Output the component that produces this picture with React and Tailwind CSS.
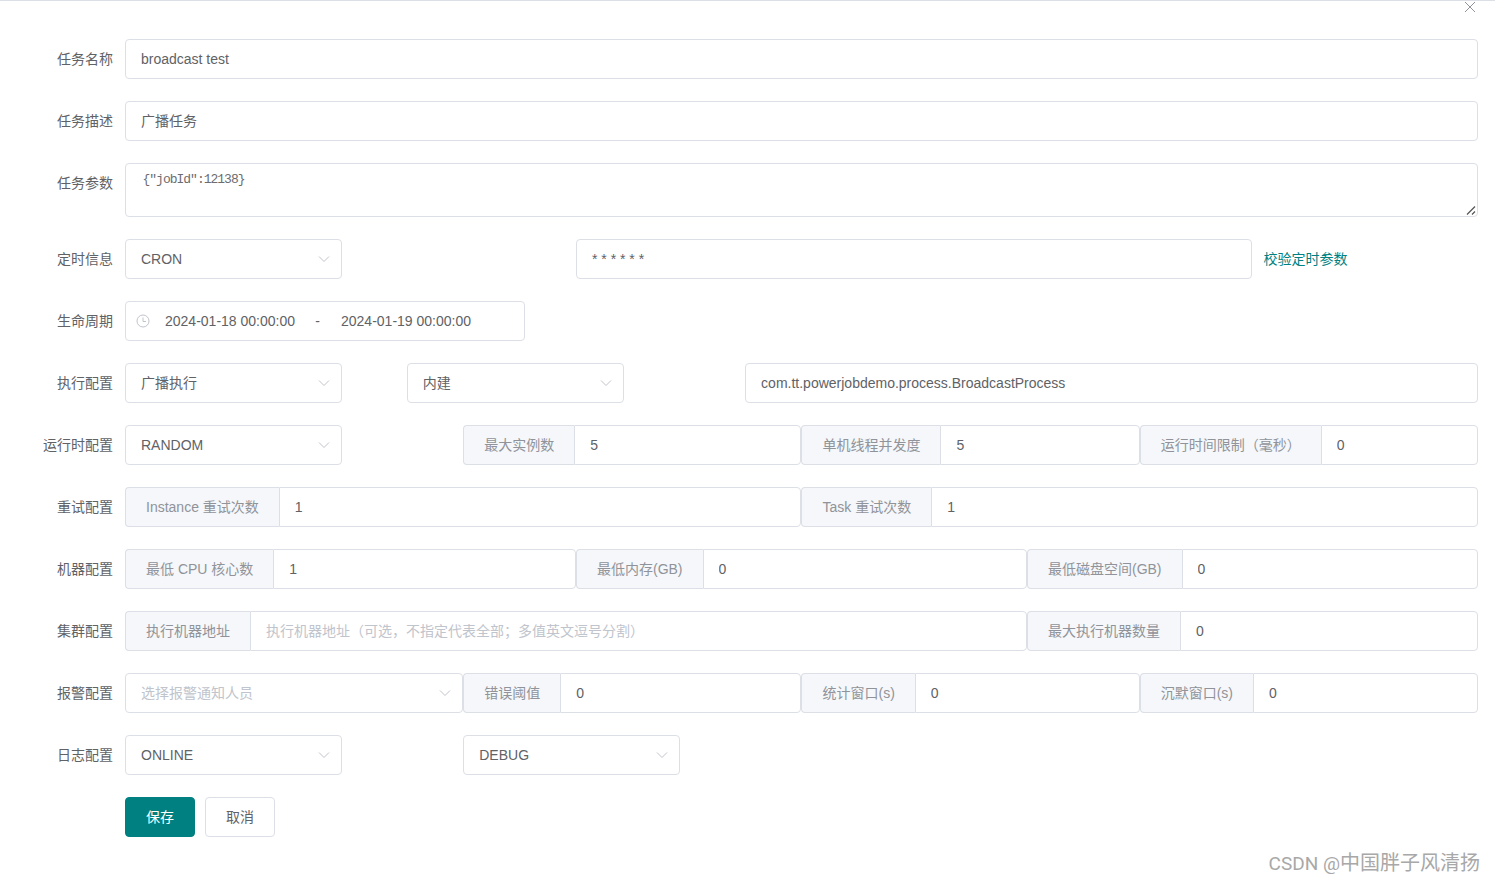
import React from "react";

const FONT = "font-['Liberation_Sans','Noto_Sans_CJK_SC',sans-serif]";

function Chevron() {
  return (
    <svg width="14" height="14" viewBox="0 0 14 14" fill="none" stroke="#c0c4cc" strokeWidth="1" className="shrink-0">
      <path d="M2 4.5 L7 9.5 L12 4.5" />
    </svg>
  );
}

function Select({ value, placeholder, className = "w-[217px]" }) {
  return (
    <div className={`flex h-10 items-center justify-between rounded-[4px] border border-[#dcdfe6] bg-white pl-[15px] pr-[10px] ${className}`}>
      <span className={value ? "text-[#606266]" : "text-[#c0c4cc]"}>{value || placeholder}</span>
      <Chevron />
    </div>
  );
}

function Input({ value = "", placeholder, className = "" }) {
  return (
    <input
      readOnly
      value={value}
      placeholder={placeholder}
      className={`block h-10 w-full rounded-[4px] border border-[#dcdfe6] bg-white px-[15px] leading-[19px] text-[#606266] outline-none placeholder:text-[#c0c4cc] ${className}`}
    />
  );
}

function Group({ addon, value, placeholder }) {
  return (
    <div className="flex h-10 w-full">
      <div className="flex shrink-0 items-center whitespace-nowrap rounded-l-[4px] border border-r-0 border-[#dcdfe6] bg-[#f5f7fa] px-5 text-[#909399]">
        {addon}
      </div>
      <Input value={value} placeholder={placeholder} className="min-w-0 flex-1 rounded-l-none" />
    </div>
  );
}

function Row({ label, children }) {
  return (
    <div className="mb-[22px] flex">
      <label className="w-[113px] shrink-0 text-right leading-10 text-[#606266]">{label}</label>
      <div className="ml-3 grid min-w-0 flex-1 grid-cols-[repeat(24,minmax(0,1fr))]">{children}</div>
    </div>
  );
}

export default function App() {
  return (
    <div className={`relative h-[882px] w-full overflow-hidden border-t border-[#dcdfe6] bg-white pr-[17.05px] pt-[38px] text-sm ${FONT}`}>
      <svg className="absolute right-[19px] top-0" width="12" height="12" viewBox="0 0 12 12" stroke="#909399" strokeWidth="1" fill="none">
        <path d="M1 1 L11 11 M11 1 L1 11" />
      </svg>

      <Row label="任务名称">
        <div className="col-span-24"><Input value="broadcast test" /></div>
      </Row>
      <Row label="任务描述">
        <div className="col-span-24"><Input value="广播任务" className="pb-[2px]" /></div>
      </Row>
      <Row label="任务参数">
        <div className="relative col-span-24">
          <textarea
            readOnly
            value={'{"jobId":12138}'}
            className="block h-[54px] w-full resize-none rounded-[4px] border border-[#dcdfe6] bg-white pb-[5px] pl-[16.5px] pr-[15px] pt-[6px] font-['Liberation_Mono',monospace] text-[13px] leading-[20px] tracking-[-1px] text-[#6b6d70] outline-none"
          />
          <svg className="pointer-events-none absolute bottom-[1px] right-[1px]" width="12" height="12" viewBox="0 0 12 12" fill="none" stroke="#555" strokeWidth="1.2">
            <path d="M2 10.5 L10 2.5 M7 10.5 L10 7.5" />
          </svg>
        </div>
      </Row>
      <Row label="定时信息">
        <div className="col-span-8"><Select value="CRON" /></div>
        <div className="col-span-12"><Input value="* * * * * *" /></div>
        <div className="col-span-4 pl-[11px] leading-10 text-[#008080]">校验定时参数</div>
      </Row>
      <Row label="生命周期">
        <div className="col-span-24">
          <div className="flex h-10 w-[400px] items-center rounded-[4px] border border-[#dcdfe6] bg-white pl-[10px] text-[#606266]">
            <svg width="14" height="14" viewBox="0 0 14 14" fill="none" stroke="#c0c4cc" strokeWidth="1" className="mr-[15px] shrink-0">
              <circle cx="7" cy="7" r="6" />
              <path d="M7 3.5 V7.5 H10" />
            </svg>
            <span className="w-[130px] whitespace-nowrap">2024-01-18 00:00:00</span>
            <span className="mr-px w-[45px] text-center">-</span>
            <span className="whitespace-nowrap">2024-01-19 00:00:00</span>
          </div>
        </div>
      </Row>
      <Row label="执行配置">
        <div className="col-span-5"><Select value="广播执行" /></div>
        <div className="col-span-6"><Select value="内建" /></div>
        <div className="col-span-13"><Input value="com.tt.powerjobdemo.process.BroadcastProcess" /></div>
      </Row>
      <Row label="运行时配置">
        <div className="col-span-6"><Select value="RANDOM" /></div>
        <div className="col-span-6"><Group addon="最大实例数" value="5" /></div>
        <div className="col-span-6"><Group addon="单机线程并发度" value="5" /></div>
        <div className="col-span-6"><Group addon="运行时间限制（毫秒）" value="0" /></div>
      </Row>
      <Row label="重试配置">
        <div className="col-span-12"><Group addon="Instance 重试次数" value="1" /></div>
        <div className="col-span-12"><Group addon="Task 重试次数" value="1" /></div>
      </Row>
      <Row label="机器配置">
        <div className="col-span-8"><Group addon="最低 CPU 核心数" value="1" /></div>
        <div className="col-span-8"><Group addon="最低内存(GB)" value="0" /></div>
        <div className="col-span-8"><Group addon="最低磁盘空间(GB)" value="0" /></div>
      </Row>
      <Row label="集群配置">
        <div className="col-span-16"><Group addon="执行机器地址" placeholder="执行机器地址（可选，不指定代表全部；多值英文逗号分割）" /></div>
        <div className="col-span-8"><Group addon="最大执行机器数量" value="0" /></div>
      </Row>
      <Row label="报警配置">
        <div className="col-span-6"><Select placeholder="选择报警通知人员" className="w-full" /></div>
        <div className="col-span-6"><Group addon="错误阈值" value="0" /></div>
        <div className="col-span-6"><Group addon="统计窗口(s)" value="0" /></div>
        <div className="col-span-6"><Group addon="沉默窗口(s)" value="0" /></div>
      </Row>
      <Row label="日志配置">
        <div className="col-span-6"><Select value="ONLINE" /></div>
        <div className="col-span-6"><Select value="DEBUG" /></div>
      </Row>
      <div className="ml-[125px] flex gap-[10px]">
        <button className="h-10 w-[70px] rounded-[4px] border border-[#008080] bg-[#008080] text-white">保存</button>
        <button className="h-10 w-[70px] rounded-[4px] border border-[#dcdfe6] bg-white text-[#606266]">取消</button>
      </div>

      <div className="absolute bottom-[4px] right-[15px] flex items-baseline whitespace-nowrap text-xl text-[#a8a8a8]">
        <span className="whitespace-pre font-['Roboto',sans-serif] text-[19px]">CSDN @</span>
        <span>中国胖子风清扬</span>
      </div>
    </div>
  );
}
